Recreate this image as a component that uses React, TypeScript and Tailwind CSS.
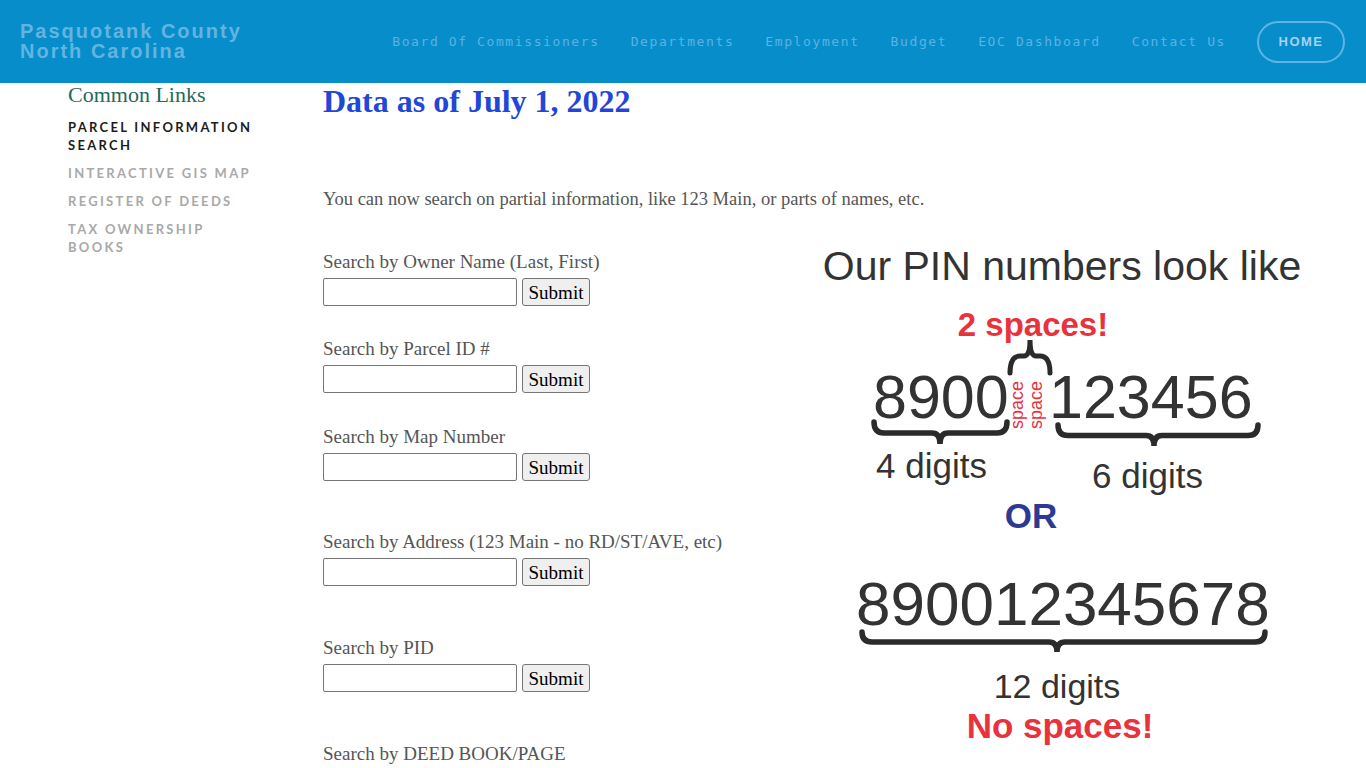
import React from "react";

const navLinks = ["Board Of Commissioners", "Departments", "Employment", "Budget", "EOC Dashboard", "Contact Us"];

const sideLinks = [
	{ label: "PARCEL INFORMATION SEARCH", active: true },
	{ label: "INTERACTIVE GIS MAP", active: false },
	{ label: "REGISTER OF DEEDS", active: false },
	{ label: "TAX OWNERSHIP BOOKS", active: false },
];

const searches = [
	{ label: "Search by Owner Name (Last, First)", gap: "mt-0" },
	{ label: "Search by Parcel ID #", gap: "mt-[32px]" },
	{ label: "Search by Map Number", gap: "mt-[33px]" },
	{ label: "Search by Address (123 Main - no RD/ST/AVE, etc)", gap: "mt-[50px]" },
	{ label: "Search by PID", gap: "mt-[51px]" },
	{ label: "Search by DEED BOOK/PAGE", gap: "mt-[51px]", noInput: true },
];

// curly brace lying flat, tip pointing down
const braceDown = (x1: number, x2: number, y: number, h: number, tip: number) => {
	const m = y + h / 2;
	return `M${x1} ${y} Q${x1} ${m} ${x1 + 10} ${m} L${tip - 8} ${m} Q${tip} ${m} ${tip} ${y + h} Q${tip} ${m} ${tip + 8} ${m} L${x2 - 10} ${m} Q${x2} ${m} ${x2} ${y}`;
};

const sans = "'Liberation Sans', Arial, sans-serif";

const PinGraphic = () => (
	<svg width="490" height="520" viewBox="0 0 490 520" className="-mt-[11px] shrink-0" fontFamily={sans}>
		<text x="242" y="40" fontSize="41" fill="#333" textAnchor="middle">Our PIN numbers look like</text>
		<text x="213" y="96" fontSize="33" fontWeight="bold" fill="#e8323c" textAnchor="middle">2 spaces!</text>

		<path d="M190 133 Q190 116 200 116 L204 116 Q210 116 210 100 Q210 116 216 116 L220 116 Q230 116 230 133" fill="none" stroke="#2b2b2b" strokeWidth="5" strokeLinecap="round" />

		<text x="53" y="178" fontSize="61" fill="#333">8900</text>
		<text x="229" y="178" fontSize="61" fill="#333">123456</text>
		<text transform="translate(203 165) rotate(-90)" fontSize="18" fill="#e8323c" textAnchor="middle">space</text>
		<text transform="translate(222 165) rotate(-90)" fontSize="18" fill="#e8323c" textAnchor="middle">space</text>

		<path d={braceDown(54, 187, 182, 22, 120)} fill="none" stroke="#2b2b2b" strokeWidth="5.5" strokeLinecap="round" />
		<path d={braceDown(238, 438, 185, 21, 334)} fill="none" stroke="#2b2b2b" strokeWidth="5.5" strokeLinecap="round" />

		<text x="56" y="238" fontSize="35" fill="#333">4 digits</text>
		<text x="272" y="248" fontSize="35" fill="#333">6 digits</text>

		<text x="211" y="288" fontSize="35" fontWeight="bold" fill="#2c3a93" textAnchor="middle">OR</text>

		<text x="36" y="385" fontSize="62" fill="#333">890012345678</text>
		<path d={braceDown(42, 445, 392, 20, 237)} fill="none" stroke="#2b2b2b" strokeWidth="5.5" strokeLinecap="round" />

		<text x="237" y="458" fontSize="34" fill="#333" textAnchor="middle">12 digits</text>
		<text x="240" y="498" fontSize="35" fontWeight="bold" fill="#e8323c" textAnchor="middle">No spaces!</text>
	</svg>
);

const App: React.FC = () => {
	return (
		<div className="min-h-screen bg-white">
			<header className="h-[83px] bg-[#088dcb] flex items-center justify-between pl-5 pr-[21px]">
				<div className="font-['Liberation_Sans',Arial,sans-serif] font-bold text-[20px] leading-[20px] tracking-[2px] text-[#62b4e1] -mt-[1px]">
					<div>Pasquotank County</div>
					<div>North Carolina</div>
				</div>
				<nav className="flex items-center">
					<div className="flex items-center gap-[31px] font-['DejaVu_Sans_Mono',monospace] text-[13px] tracking-[1.6px] text-[#5cb2e2]">
						{navLinks.map((n) => (
							<a key={n} className="whitespace-nowrap">{n}</a>
						))}
					</div>
					<a className="ml-[31px] w-[88px] h-[42px] rounded-full border-2 border-[#5cb5e4] flex items-center justify-center font-['Liberation_Sans',Arial,sans-serif] font-bold text-[13px] tracking-[1.5px] text-[#a3d3ef]">
						HOME
					</a>
				</nav>
			</header>

			<div className="flex">
				<aside className="w-[323px] shrink-0 pl-[68px]">
					<h3 className="font-['Liberation_Serif',serif] text-[22px] leading-[24px] text-[#1f6b5b]">Common Links</h3>
					<ul className="mt-[11px] w-[192px] flex flex-col gap-[10px] font-['Lato',sans-serif] font-bold text-[13px] leading-[18px] tracking-[2.3px]">
						{sideLinks.map((l) => (
							<li key={l.label} className={l.active ? "text-[#1c1c1c]" : "text-[#a9a9a9]"}>{l.label}</li>
						))}
					</ul>
				</aside>

				<main className="flex-1 font-['Liberation_Serif',serif]">
					<h1 className="mt-[2px] text-[32px] leading-none font-bold text-[#1f47d8]">Data as of July 1, 2022</h1>
					<p className="mt-[70px] text-[18.5px] leading-[24px] text-[#555]">
						You can now search on partial information, like 123 Main, or parts of names, etc.
					</p>

					<div className="mt-[40px] flex items-start">
						<div className="w-[497px] shrink-0">
							{searches.map((s) => (
								<div key={s.label} className={s.gap}>
									<label className="block text-[19px] leading-[22px] text-[#555]">{s.label}</label>
									{!s.noInput && (
										<div className="mt-[5px] flex gap-[5px]">
											<input type="text" className="w-[194px] h-[28px] border border-[#767676] rounded-[2px] bg-white" />
											<button className="w-[68px] h-[28px] bg-[#efefef] border border-[#767676] rounded-[3px] text-[19px] leading-none text-black">Submit</button>
										</div>
									)}
								</div>
							))}
						</div>
						<PinGraphic />
					</div>
				</main>
			</div>
		</div>
	);
};

export default App;
